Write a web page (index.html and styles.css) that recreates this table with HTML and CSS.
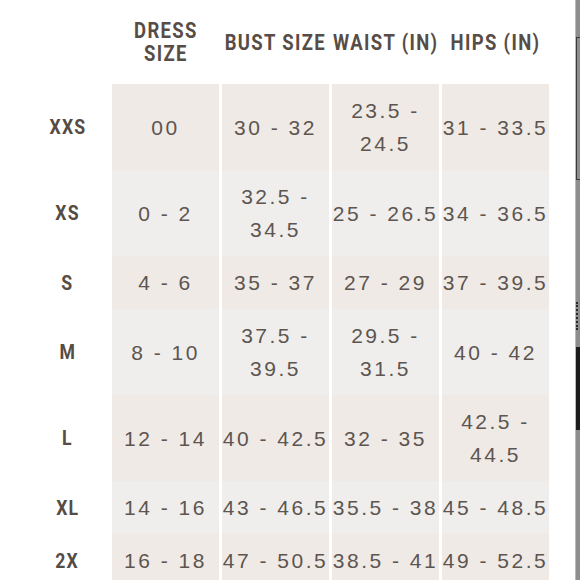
FILE: index.html
```html
<!DOCTYPE html>
<html>
<head>
<meta charset="utf-8">
<link rel="stylesheet" href="styles.css">
</head>
<body>
<div class="page">
  <div class="chart">
    <div class="grid">
      <div class="head"></div>
      <div class="head"><span class="squeeze">DRESS<br>SIZE</span></div>
      <div class="head"><span class="squeeze">BUST SIZE</span></div>
      <div class="head"><span class="squeeze">WAIST (IN)</span></div>
      <div class="head"><span class="squeeze">HIPS (IN)</span></div>

      <div class="label"><span class="squeeze">XXS</span></div>
      <div class="cell warm">00</div>
      <div class="cell warm">30 - 32</div>
      <div class="cell warm">23.5 -<br>24.5</div>
      <div class="cell warm">31 - 33.5</div>

      <div class="label"><span class="squeeze">XS</span></div>
      <div class="cell cool">0 - 2</div>
      <div class="cell cool">32.5 -<br>34.5</div>
      <div class="cell cool">25 - 26.5</div>
      <div class="cell cool">34 - 36.5</div>

      <div class="label"><span class="squeeze">S</span></div>
      <div class="cell warm">4 - 6</div>
      <div class="cell warm">35 - 37</div>
      <div class="cell warm">27 - 29</div>
      <div class="cell warm">37 - 39.5</div>

      <div class="label"><span class="squeeze">M</span></div>
      <div class="cell cool">8 - 10</div>
      <div class="cell cool">37.5 -<br>39.5</div>
      <div class="cell cool">29.5 -<br>31.5</div>
      <div class="cell cool">40 - 42</div>

      <div class="label"><span class="squeeze">L</span></div>
      <div class="cell warm">12 - 14</div>
      <div class="cell warm">40 - 42.5</div>
      <div class="cell warm">32 - 35</div>
      <div class="cell warm">42.5 -<br>44.5</div>

      <div class="label"><span class="squeeze">XL</span></div>
      <div class="cell cool">14 - 16</div>
      <div class="cell cool">43 - 46.5</div>
      <div class="cell cool">35.5 - 38</div>
      <div class="cell cool">45 - 48.5</div>

      <div class="label"><span class="squeeze">2X</span></div>
      <div class="cell warm">16 - 18</div>
      <div class="cell warm">47 - 50.5</div>
      <div class="cell warm">38.5 - 41</div>
      <div class="cell warm">49 - 52.5</div>
    </div>
  </div>
  <div class="edge">
    <div class="edge-frame"></div>
    <div class="edge-dots"></div>
    <div class="edge-block"></div>
  </div>
</div>
</body>
</html>
```

FILE: styles.css
```css
html, body {
  margin: 0;
  padding: 0;
  background: #ffffff;
  overflow: hidden;
}

.page {
  display: flex;
  width: 580px;
  height: 580px;
  overflow: hidden;
}

.chart {
  flex: 1;
  padding-left: 26px;
}

.grid {
  display: grid;
  grid-template-columns: 83px repeat(4, 107px);
  column-gap: 3px;
}

.head {
  height: 84px;
  display: flex;
  align-items: center;
  justify-content: center;
  text-align: center;
  font-family: Roboto, "DejaVu Sans", sans-serif;
  font-weight: bold;
  font-size: 22px;
  line-height: 23px;
  letter-spacing: 1.6px;
  color: #574d46;
  white-space: nowrap;
}

.squeeze {
  display: inline-block;
  transform: scaleX(0.84);
}

.label {
  display: flex;
  align-items: center;
  justify-content: center;
  font-family: Roboto, "DejaVu Sans", sans-serif;
  font-weight: bold;
  font-size: 21px;
  letter-spacing: 1.4px;
  color: #554c45;
}

.cell {
  display: flex;
  align-items: center;
  justify-content: center;
  text-align: center;
  padding: 10px 0;
  font-family: "Liberation Sans", Arial, sans-serif;
  font-size: 21px;
  line-height: 33px;
  letter-spacing: 2.5px;
  color: #5d5550;
  white-space: nowrap;
}

.warm {
  background: #efeae6;
}

.cool {
  background: #efeeed;
}

.edge {
  position: relative;
  width: 4px;
  background: #8d8d8d;
  border-left: 1px solid #b9b9b9;
}

.edge-frame {
  position: absolute;
  left: 0;
  top: 37px;
  width: 3px;
  height: 141px;
  border-left: 1px solid #3a3a3a;
  border-top: 1px solid #3a3a3a;
  border-bottom: 1px solid #3a3a3a;
}

.edge-dots {
  position: absolute;
  left: 0;
  top: 302px;
  width: 2px;
  height: 28px;
  border-left: 2px dotted #2a2a2a;
}

.edge-block {
  position: absolute;
  left: 0;
  top: 347px;
  width: 4px;
  height: 83px;
  background: #1c1c1c;
}
```
